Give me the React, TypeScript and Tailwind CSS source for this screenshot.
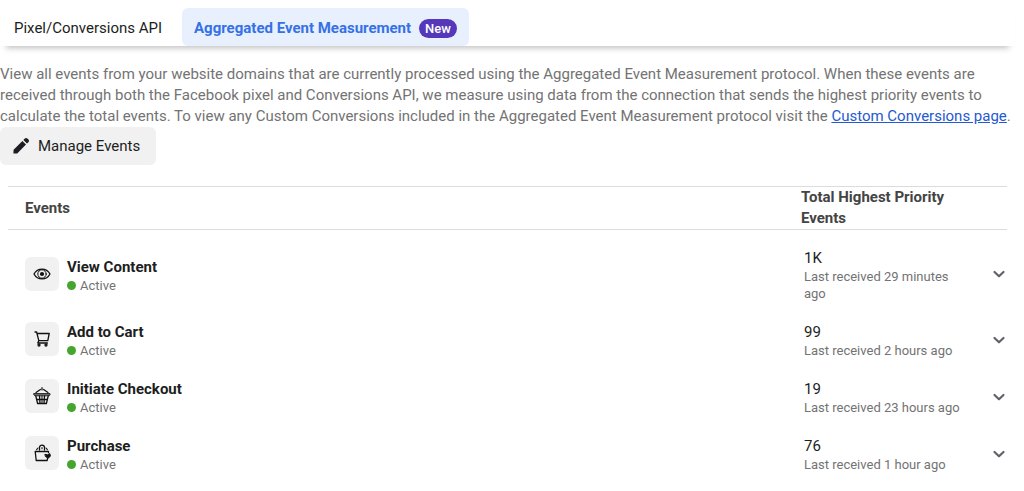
import type { ReactNode } from 'react';

interface EventRow {
  name: string;
  total: string;
  received: string;
  icon: ReactNode;
}

const iconProps = {
  width: 18,
  height: 18,
  viewBox: '0 0 18 18',
  fill: 'none',
  stroke: '#111',
  strokeWidth: 1.3,
  strokeLinecap: 'round' as const,
  strokeLinejoin: 'round' as const,
  'aria-hidden': true,
};

function EyeIcon() {
  return (
    <svg {...iconProps}>
      <path d="M1 9C4.6 2.4 13.4 2.4 17 9C13.4 15.6 4.6 15.6 1 9Z" />
      <circle cx="9" cy="9" r="4.2" strokeWidth="1" />
      <circle cx="9" cy="9" r="2.1" fill="#111" stroke="none" />
    </svg>
  );
}

function CartIcon() {
  return (
    <svg {...iconProps}>
      <path d="M2 2H3.6L5.8 10.6H14.8L16.2 3.5H4.1" />
      <path d="M5.8 10.6L4.8 13H14.4" />
      <circle cx="6" cy="15" r="1" />
      <circle cx="13" cy="15" r="1" />
    </svg>
  );
}

function BasketIcon() {
  return (
    <svg {...iconProps}>
      <path d="M3 5.6L7.4 2.4M15 5.6L10.6 2.4M9 0.6V3" strokeWidth="1.2" />
      <path d="M1 6.5H17V8L16 8.8H2L1 8Z" fill="#666" stroke="#333" strokeWidth="1" />
      <path d="M2.8 9L4.6 16.5H13.4L15.2 9M6.5 9L7 16.5M11.5 9L11 16.5M3.6 12.5H14.4" strokeWidth="1.3" />
      <path d="M9 9V16.5" strokeWidth="1" />
    </svg>
  );
}

function BagIcon() {
  return (
    <svg {...iconProps}>
      <path d="M15.5 8.6V7.5H2.2L3.2 16.5H14.2L14.5 14.4" />
      <path d="M6.5 6V3.5C6.5 0.4 11.5 0.4 11.5 3.5V6" strokeWidth="1.3" />
      <path d="M3.6 5.6L5 4M14.4 5.6L13 4M9 3.6V4.8" strokeWidth="1.1" />
      <path d="M12.2 10.4L14.4 10.8L16.8 9.6L17.4 12L15.4 14.2L12.8 12.8Z" fill="#111" strokeWidth="1" />
    </svg>
  );
}

const events: EventRow[] = [
  { name: 'View Content', total: '1K', received: 'Last received 29 minutes ago', icon: <EyeIcon /> },
  { name: 'Add to Cart', total: '99', received: 'Last received 2 hours ago', icon: <CartIcon /> },
  { name: 'Initiate Checkout', total: '19', received: 'Last received 23 hours ago', icon: <BasketIcon /> },
  { name: 'Purchase', total: '76', received: 'Last received 1 hour ago', icon: <BagIcon /> },
];

function Tabs() {
  return (
    <div
      role="tablist"
      className="flex items-end gap-2 bg-white pt-2 pl-[2px] shadow-[0_8px_6px_-6px_rgba(0,0,0,0.25)]"
    >
      <button type="button" role="tab" aria-selected="false" className="h-[38px] px-3 pt-[2px] text-[#1c1e21]">
        Pixel/Conversions API
      </button>
      <button
        type="button"
        role="tab"
        aria-selected="true"
        className="flex h-[38px] items-center gap-2 rounded-md bg-[#e9f0fd] px-3 pt-[2px] font-bold text-[#3571e6]"
      >
        Aggregated Event Measurement
        <span className="rounded-full bg-[#5438b9] px-[6px] text-[13px] leading-[19px] font-medium text-white">
          New
        </span>
      </button>
    </div>
  );
}

export default function App() {
  return (
    <main className="bg-white pr-[9px] font-['Roboto',sans-serif] text-[15px] leading-[21px] text-[#1c1e21]">
      <Tabs />

      <p className="mt-[18px] text-[#737373]">
        View all events from your website domains that are currently processed using the Aggregated Event Measurement
        protocol. When these events are received through both the Facebook pixel and Conversions API, we measure using
        data from the connection that sends the highest priority events to calculate the total events. To view any
        Custom Conversions included in the Aggregated Event Measurement protocol visit the{' '}
        <a href="#custom-conversions" className="text-[#2459cf] underline">
          Custom Conversions page
        </a>
        .
      </p>

      <button type="button" className="flex h-[38px] items-center gap-2 rounded-md bg-[#f1f1f1] px-3 pr-4">
        <svg width="18" height="18" viewBox="0 0 18 18" fill="#1c1e21" aria-hidden="true">
          <path d="M1.4 16.6L1.6 12.8L10.4 4L14 7.6L5.2 16.4L1.4 16.6ZM11.4 3L12.8 1.6C13.6 0.8 14.7 0.8 15.4 1.6L16.4 2.6C17.2 3.3 17.2 4.4 16.4 5.2L15 6.6Z" />
        </svg>
        Manage Events
      </button>

      <div className="mx-2 mt-[21px]">
        <table className="w-full table-fixed border-collapse text-left">
          <colgroup>
            <col />
            <col className="w-[183px]" />
            <col className="w-10" />
          </colgroup>
          <thead>
            <tr className="border-y border-[#dcdcdc] text-[#444]">
              <th scope="col" className="pl-[17px] font-bold">Events</th>
              <th scope="col" colSpan={2} className="pr-14 pl-[17px] font-bold">Total Highest Priority Events</th>
            </tr>
          </thead>
          <tbody className="before:block before:h-2 before:content-['']">
            {events.map((event) => (
              <tr key={event.name}>
                <td className="py-[10px] pl-[17px]">
                  <div className="flex items-start gap-2">
                    <div className="flex size-[34px] items-center justify-center rounded-md bg-[#f1f1f1]">
                      {event.icon}
                    </div>
                    <div>
                      <div className="leading-5 font-bold">{event.name}</div>
                      <div className="flex items-center gap-1 text-[13px] leading-[17px] text-[#737373]">
                        <span className="size-[9px] rounded-full bg-[#46a52f]" />
                        Active
                      </div>
                    </div>
                  </div>
                </td>
                <td className="py-[10px] pl-5">
                  <div className="leading-5">{event.total}</div>
                  <div className="text-[13px] leading-[17px] text-[#737373]">{event.received}</div>
                </td>
                <td>
                  <button type="button" aria-label={`Expand ${event.name}`} className="ml-auto block w-4">
                    <svg
                      width="16"
                      height="16"
                      viewBox="0 0 16 16"
                      fill="none"
                      stroke="#5f6368"
                      strokeWidth="2.2"
                      strokeLinecap="round"
                      strokeLinejoin="round"
                      aria-hidden="true"
                    >
                      <path d="M3.5 5L8 9.3L12.5 5" />
                    </svg>
                  </button>
                </td>
              </tr>
            ))}
          </tbody>
        </table>
      </div>
    </main>
  );
}
